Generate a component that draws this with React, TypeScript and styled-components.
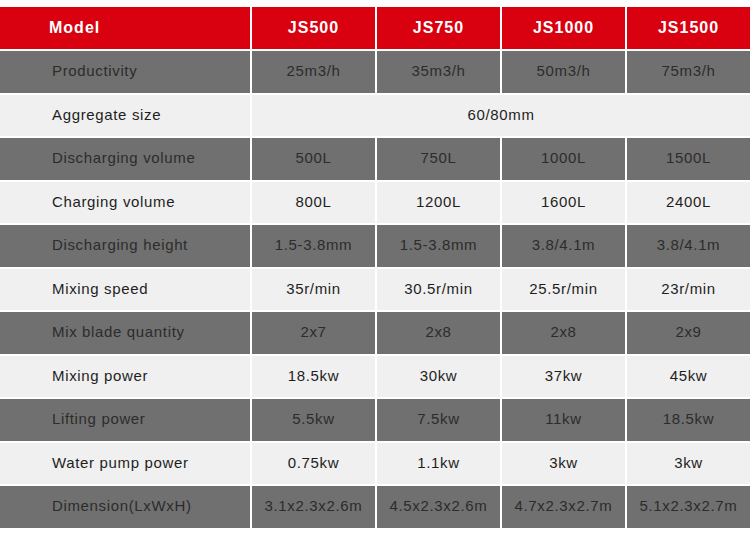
import React from "react";
import styled, { createGlobalStyle } from "styled-components";

const Global = createGlobalStyle`
  html, body { margin: 0; padding: 0; background: #ffffff; }
  body { font-family: "Liberation Sans", Arial, sans-serif; }
`;

const Page = styled.div`
  width: 750px;
  height: 559px;
  padding-top: 7px;
  box-sizing: border-box;
  background: #ffffff;
`;

const Table = styled.div`
  display: grid;
  grid-template-columns: 250px repeat(4, 1fr);
  grid-template-rows: 42px;
  grid-auto-rows: 41.5px;
  gap: 2px;
  background: #ffffff;
`;

type Tone = "head" | "dark" | "light";

const Cell = styled.div<{ $tone: Tone; $label?: boolean; $span?: number }>`
  display: flex;
  align-items: center;
  justify-content: ${(p) => (p.$label ? "flex-start" : "center")};
  padding-left: ${(p) => (p.$label ? (p.$tone === "head" ? "49px" : "52px") : "0")};
  padding-bottom: ${(p) => (p.$tone === "head" ? "0" : "2px")};
  grid-column: ${(p) => (p.$span ? `span ${p.$span}` : "auto")};
  background: ${(p) =>
    p.$tone === "head" ? "#d9000f" : p.$tone === "dark" ? "#707070" : "#f0f0f0"};
  color: ${(p) =>
    p.$tone === "head" ? "#ffffff" : p.$tone === "dark" ? "#2c2c2c" : "#1e1e1e"};
  font-size: ${(p) => (p.$tone === "head" ? "16px" : "15px")};
  font-weight: ${(p) => (p.$tone === "head" ? 700 : 400)};
  letter-spacing: ${(p) => (p.$tone === "head" ? "1px" : "0.65px")};
  white-space: nowrap;
`;

const rows: { label: string; values: string[] }[] = [
  { label: "Productivity", values: ["25m3/h", "35m3/h", "50m3/h", "75m3/h"] },
  { label: "Aggregate size", values: ["60/80mm"] },
  { label: "Discharging volume", values: ["500L", "750L", "1000L", "1500L"] },
  { label: "Charging volume", values: ["800L", "1200L", "1600L", "2400L"] },
  { label: "Discharging height", values: ["1.5-3.8mm", "1.5-3.8mm", "3.8/4.1m", "3.8/4.1m"] },
  { label: "Mixing speed", values: ["35r/min", "30.5r/min", "25.5r/min", "23r/min"] },
  { label: "Mix blade quantity", values: ["2x7", "2x8", "2x8", "2x9"] },
  { label: "Mixing power", values: ["18.5kw", "30kw", "37kw", "45kw"] },
  { label: "Lifting power", values: ["5.5kw", "7.5kw", "11kw", "18.5kw"] },
  { label: "Water pump power", values: ["0.75kw", "1.1kw", "3kw", "3kw"] },
  { label: "Dimension(LxWxH)", values: ["3.1x2.3x2.6m", "4.5x2.3x2.6m", "4.7x2.3x2.7m", "5.1x2.3x2.7m"] },
];

const models = ["JS500", "JS750", "JS1000", "JS1500"];

export default function App() {
  return (
    <>
      <Global />
      <Page>
        <Table>
          <Cell $tone="head" $label>Model</Cell>
          {models.map((m) => (
            <Cell key={m} $tone="head">{m}</Cell>
          ))}
          {rows.map((r, i) => {
            const tone: Tone = i % 2 === 0 ? "dark" : "light";
            return (
              <React.Fragment key={r.label}>
                <Cell $tone={tone} $label>{r.label}</Cell>
                {r.values.length === 1 ? (
                  <Cell $tone={tone} $span={4}>{r.values[0]}</Cell>
                ) : (
                  r.values.map((v, j) => (
                    <Cell key={j} $tone={tone}>{v}</Cell>
                  ))
                )}
              </React.Fragment>
            );
          })}
        </Table>
      </Page>
    </>
  );
}
